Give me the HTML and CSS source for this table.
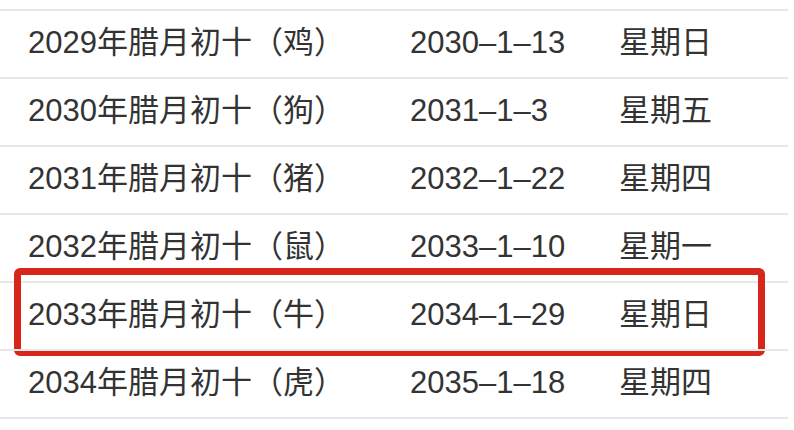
FILE: index.html
```html
<!DOCTYPE html>
<html lang="zh-CN">
<head>
<meta charset="utf-8">
<title>腊月初十</title>
<link rel="stylesheet" href="styles.css">
</head>
<body>
<div class="table">
  <div class="row">
    <span class="cell lunar">2029年腊月初十（鸡）</span>
    <span class="cell date">2030–1–13</span>
    <span class="cell week">星期日</span>
  </div>
  <div class="row">
    <span class="cell lunar">2030年腊月初十（狗）</span>
    <span class="cell date">2031–1–3</span>
    <span class="cell week">星期五</span>
  </div>
  <div class="row">
    <span class="cell lunar">2031年腊月初十（猪）</span>
    <span class="cell date">2032–1–22</span>
    <span class="cell week">星期四</span>
  </div>
  <div class="row">
    <span class="cell lunar">2032年腊月初十（鼠）</span>
    <span class="cell date">2033–1–10</span>
    <span class="cell week">星期一</span>
  </div>
  <div class="row highlighted">
    <span class="cell lunar">2033年腊月初十（牛）</span>
    <span class="cell date">2034–1–29</span>
    <span class="cell week">星期日</span>
    <span class="mark"></span>
  </div>
  <div class="row">
    <span class="cell lunar">2034年腊月初十（虎）</span>
    <span class="cell date">2035–1–18</span>
    <span class="cell week">星期四</span>
  </div>
</div>
</body>
</html>
```

FILE: styles.css
```css
html, body {
  margin: 0;
  padding: 0;
  background: #ffffff;
  overflow: hidden;
}

body {
  width: 794px;
  height: 430px;
  font-family: "Liberation Sans", "Noto Sans CJK SC", sans-serif;
  color: #333333;
}

.table {
  width: 788px;
  padding-top: 9px;
}

.row {
  position: relative;
  box-sizing: border-box;
  height: 68px;
  border-top: 2px solid #e8e8e8;
  display: grid;
  grid-template-columns: 382px 209px 1fr;
  align-items: center;
  padding-left: 28px;
  padding-bottom: 3px;
  font-size: 31px;
  line-height: 36px;
  white-space: nowrap;
}

.row:last-child {
  border-bottom: 2px solid #e8e8e8;
  height: 70px;
}

.mark {
  position: absolute;
  left: 14px;
  top: -15px;
  width: 751px;
  height: 88px;
  box-sizing: border-box;
  border: 7px solid #d8261b;
  border-radius: 6px;
}
```
